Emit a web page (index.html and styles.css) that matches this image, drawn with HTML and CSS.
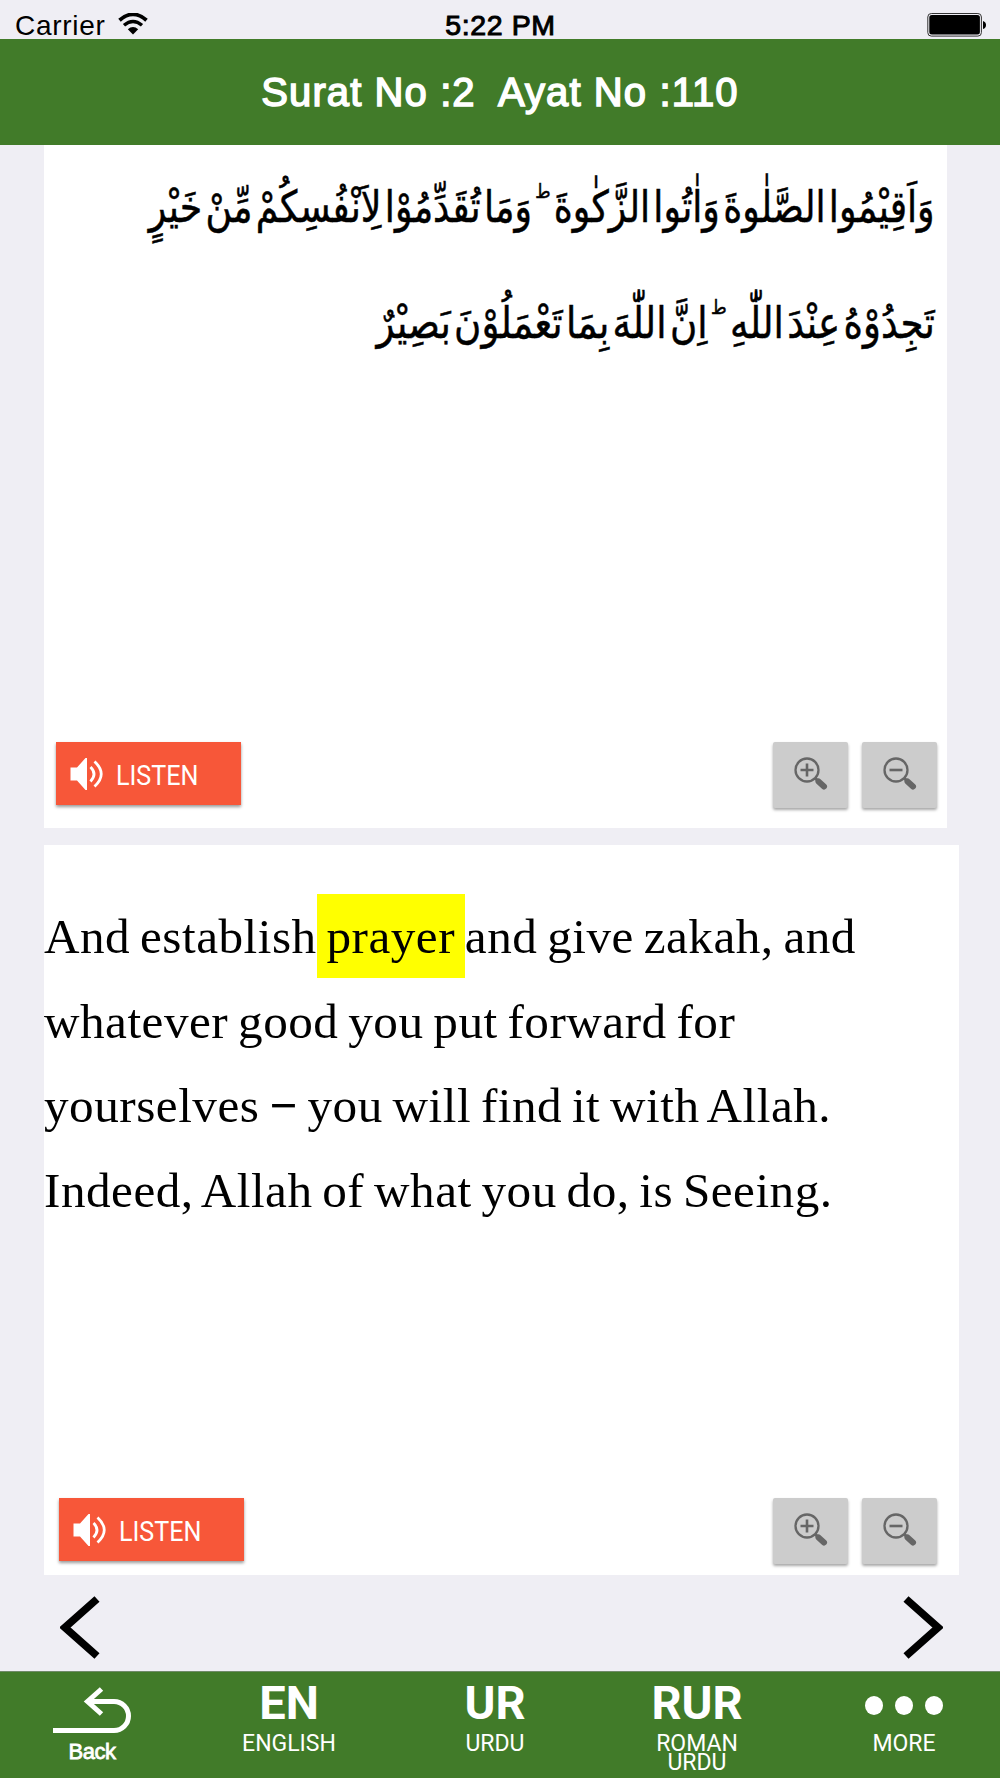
FILE: index.html
```html
<!DOCTYPE html>
<html lang="en">
<head>
    <meta charset="UTF-8">
    <meta name="viewport" content="width=device-width, initial-scale=1.0">
    <title>Surat No :2 Ayat No :110</title>
    <link rel="stylesheet" href="styles.css">
</head>
<body>
    <!-- Status Bar -->
    <div class="status-bar">
        <div class="carrier">
            <span>Carrier</span>
            <svg class="wifi" width="30" height="22" viewBox="0 0 30 22">
                <path d="M1.5 7.2 Q15 -4.5 28.5 7.2" fill="none" stroke="#000" stroke-width="3.8"/>
                <path d="M6 12.2 Q15 4.6 24 12.2" fill="none" stroke="#000" stroke-width="3.4"/>
                <path d="M9.8 16.2 Q15 12 20.2 16.2 L15 21.5 Z"/>
            </svg>
        </div>
        <span class="time">5:22 PM</span>
        <svg class="battery" width="60" height="24" viewBox="0 0 60 24">
            <rect x="1.8" y="0.5" width="53.6" height="22.6" rx="3.5" fill="#efeef4" stroke="#333" stroke-width="1"/>
            <rect x="3.3" y="2" width="50.6" height="19.6" rx="2.5"/>
            <path d="M57 8 Q60 9 60 12 Q60 15 57 16 Z"/>
        </svg>
    </div>

    <div class="header">
        <h1>Surat No :2&nbsp; Ayat No :110</h1>
    </div>

    <div class="main">
        <!-- Arabic Text -->
        <div class="panel panel-arabic">
            <div class="arabic" dir="rtl" lang="ar">
                <p><span class="line line-1">وَاَقِيْمُوا الصَّلٰوةَ وَاٰتُوا الزَّكٰوةَ <small>ط</small> وَمَا تُقَدِّمُوْا لِاَنْفُسِكُمْ مِّنْ خَيْرٍ</span></p>
                <p><span class="line line-2">تَجِدُوْهُ عِنْدَ اللّٰهِ <small>ط</small> اِنَّ اللّٰهَ بِمَا تَعْمَلُوْنَ بَصِيْرٌ</span></p>
            </div>
            <div class="controls">
                <button class="listen-button">
                    <svg width="34" height="34" viewBox="0 0 34 34">
                        <path d="M0.5 10.5 H7 L15.5 1 H17 V33 H15.5 L7 23.5 H0.5 Z" fill="#fff"/>
                        <path d="M20.5 10 Q27.5 17 20.5 24.5 M24.5 4.5 Q38 17 24.5 29.5" fill="none" stroke="#fff" stroke-width="2.8"/>
                    </svg>
                    <span>LISTEN</span>
                </button>
                <button class="zoom-button">
                    <svg width="34" height="34" viewBox="0 0 34 34" fill="none" stroke="#666">
                        <circle cx="13" cy="13" r="11.5" stroke-width="2.3"/>
                        <path d="M6.5 13 H19.5 M13 6.5 V19.5" stroke-width="2.6"/>
                        <path d="M21 21 L24 24" stroke-width="3"/>
                        <path d="M24.5 24.5 L30 29.5" stroke-width="6" stroke-linecap="round"/>
                    </svg>
                </button>
                <button class="zoom-button">
                    <svg width="34" height="34" viewBox="0 0 34 34" fill="none" stroke="#666">
                        <circle cx="13" cy="13" r="11.5" stroke-width="2.3"/>
                        <path d="M6.5 13 H19.5" stroke-width="2.6"/>
                        <path d="M21 21 L24 24" stroke-width="3"/>
                        <path d="M24.5 24.5 L30 29.5" stroke-width="6" stroke-linecap="round"/>
                    </svg>
                </button>
            </div>
        </div>

        <!-- Translation -->
        <div class="panel panel-translation">
            <div class="translation">
                And establish<mark> prayer </mark>and give zakah, and<br>
                whatever good you put forward for<br>
                yourselves <b>−</b> you will find it with Allah.<br>
                Indeed, Allah of what you do, is Seeing.
            </div>
            <div class="controls">
                <button class="listen-button">
                    <svg width="34" height="34" viewBox="0 0 34 34">
                        <path d="M0.5 10.5 H7 L15.5 1 H17 V33 H15.5 L7 23.5 H0.5 Z" fill="#fff"/>
                        <path d="M20.5 10 Q27.5 17 20.5 24.5 M24.5 4.5 Q38 17 24.5 29.5" fill="none" stroke="#fff" stroke-width="2.8"/>
                    </svg>
                    <span>LISTEN</span>
                </button>
                <button class="zoom-button">
                    <svg width="34" height="34" viewBox="0 0 34 34" fill="none" stroke="#666">
                        <circle cx="13" cy="13" r="11.5" stroke-width="2.3"/>
                        <path d="M6.5 13 H19.5 M13 6.5 V19.5" stroke-width="2.6"/>
                        <path d="M21 21 L24 24" stroke-width="3"/>
                        <path d="M24.5 24.5 L30 29.5" stroke-width="6" stroke-linecap="round"/>
                    </svg>
                </button>
                <button class="zoom-button">
                    <svg width="34" height="34" viewBox="0 0 34 34" fill="none" stroke="#666">
                        <circle cx="13" cy="13" r="11.5" stroke-width="2.3"/>
                        <path d="M6.5 13 H19.5" stroke-width="2.6"/>
                        <path d="M21 21 L24 24" stroke-width="3"/>
                        <path d="M24.5 24.5 L30 29.5" stroke-width="6" stroke-linecap="round"/>
                    </svg>
                </button>
            </div>
        </div>
    </div>

    <!-- Previous / Next -->
    <div class="pager">
        <svg width="40" height="63" viewBox="0 0 40 63">
            <path d="M37 3 L5 31.5 L37 60" fill="none" stroke="#000" stroke-width="7.6"/>
        </svg>
        <svg width="40" height="63" viewBox="0 0 40 63">
            <path d="M3 3 L35 31.5 L3 60" fill="none" stroke="#000" stroke-width="7.6"/>
        </svg>
    </div>

    <!-- Bottom Navigation -->
    <div class="nav">
        <div class="nav-item nav-back">
            <svg width="78" height="47" viewBox="0 0 78 47" fill="none" stroke="#fff" stroke-width="5">
                <path d="M0 43.5 H61 A14.5 14.5 0 0 0 61 14.5 H34"/>
                <path d="M48.5 2 L34.5 14.5 L48.5 27"/>
            </svg>
            <span class="back-label">Back</span>
        </div>
        <div class="nav-item"><b>EN</b><span>ENGLISH</span></div>
        <div class="nav-item"><b>UR</b><span>URDU</span></div>
        <div class="nav-item"><b>RUR</b><span>ROMAN<br>URDU</span></div>
        <div class="nav-item nav-more">
            <div class="dots"><i></i><i></i><i></i></div>
            <span>MORE</span>
        </div>
    </div>
</body>
</html>
```
FILE: styles.css
```css
* {
    box-sizing: border-box;
}

/* Body Styling */
body {
    margin: 0;
    width: 1000px;
    height: 1778px;
    background-color: #efeef4;
    font-family: "Liberation Sans", Arial, sans-serif;
    color: #000;
    overflow: hidden;
}

svg {
    display: block;
}

/* Status Bar Styling */
.status-bar {
    display: grid;
    grid-template-columns: 1fr auto 1fr;
    height: 39px;
    padding: 10px 14px 0 15px;
    line-height: 31px;
    white-space: nowrap;
}

.carrier {
    display: flex;
    gap: 13px;
    font-size: 28px;
    letter-spacing: 0.7px;
}

.wifi {
    margin-top: 3px;
}

.time {
    font-size: 28.5px;
    letter-spacing: 0.6px;
    line-height: 30px;
    -webkit-text-stroke: 1px #000;
}

.battery {
    justify-self: end;
    margin-top: 3px;
}

/* Header Styling */
.header {
    height: 106px;
    background-color: #417b29;
    color: #fff;
    text-align: center;
}

.header h1 {
    margin: 0;
    font-size: 40px;
    font-weight: normal;
    letter-spacing: 1.1px;
    line-height: 106px;
    white-space: nowrap;
    -webkit-text-stroke: 1.5px #fff;
}

/* Panels Styling */
.main {
    display: flex;
    flex-direction: column;
    gap: 17px;
    padding-left: 44px;
}

.panel {
    display: flex;
    flex-direction: column;
    justify-content: space-between;
    background-color: #fff;
}

.panel-arabic {
    width: 903px;
    height: 683px;
    padding: 4px 12px 20px 12px;
}

.panel-arabic .controls {
    margin-right: -2px;
}

.panel-translation {
    width: 915px;
    height: 730px;
    padding: 49px 22px 11px 0;
}

.arabic p {
    margin: 0;
    height: 116px;
    line-height: 116px;
    font-family: "DejaVu Sans", sans-serif;
    font-size: 44px;
    word-spacing: -10px;
    white-space: nowrap;
    -webkit-text-stroke: 0.5px #000;
}

.arabic small {
    font-size: 20px;
    vertical-align: 24px;
    line-height: 1;
}

.line {
    display: inline-block;
    transform-origin: right center;
}

.line-1 {
    transform: scaleX(0.825);
}

.line-2 {
    transform: scaleX(0.845);
}

.translation {
    padding-top: 1px;
    font-family: "Liberation Serif", "Times New Roman", serif;
    font-size: 49.2px;
    letter-spacing: 0.5px;
    word-spacing: -3px;
    line-height: 84.5px;
    white-space: nowrap;
}

.translation mark {
    display: inline-block;
    height: 84px;
    margin-top: -1px;
    background-color: #ff0;
    color: #000;
    line-height: 86px;
    white-space: pre;
    vertical-align: top;
}

/* Buttons Styling */
.controls {
    display: flex;
    align-items: flex-start;
    gap: 14px;
    height: 66px;
}

.panel-translation .controls {
    padding-left: 14.5px;
}

.listen-button {
    display: flex;
    align-items: center;
    gap: 12px;
    width: 185px;
    height: 63px;
    margin-right: auto;
    padding: 1px 0 0 14px;
    border: none;
    background-color: #f75739;
    box-shadow: 0 2px 3px rgba(0, 0, 0, 0.4);
    color: #fff;
    font-family: Roboto, sans-serif;
    font-size: 27px;
}

.listen-button span {
    padding-top: 3px;
    transform: scaleX(0.93);
    transform-origin: left center;
}

.zoom-button {
    width: 75px;
    height: 66px;
    padding: 0 0 2px 21px;
    border: none;
    border-radius: 2px;
    background-color: #ccc;
    box-shadow: 0 2px 3px rgba(0, 0, 0, 0.35);
}

/* Pager Styling */
.pager {
    display: flex;
    justify-content: space-between;
    height: 96px;
    padding: 21px 57px 0 60px;
}

/* Navigation Styling */
.nav {
    display: grid;
    grid-template-columns: 182px 214px 198px 206px 200px;
    height: 107px;
    border-top: 1px solid #6f8a68;
    background-color: #417b29;
    color: #fff;
    font-family: Roboto, sans-serif;
}

.nav-item {
    display: flex;
    flex-direction: column;
    align-items: center;
    padding-top: 11px;
    font-size: 23px;
    line-height: 19px;
    text-align: center;
}

.nav-item b {
    margin-bottom: 11px;
    font-size: 47px;
    line-height: 40px;
}

.nav-back {
    padding: 15px 0 0 2px;
}

.back-label {
    margin-top: 8px;
    font-family: "Liberation Sans", sans-serif;
    font-size: 22px;
    letter-spacing: -0.5px;
    -webkit-text-stroke: 0.8px #fff;
}

.nav-more {
    padding: 24px 0 0 8px;
}

.dots {
    display: flex;
    gap: 12px;
    margin-bottom: 19px;
}

.dots i {
    width: 18px;
    height: 19px;
    border-radius: 50%;
    background-color: #fff;
}
```
